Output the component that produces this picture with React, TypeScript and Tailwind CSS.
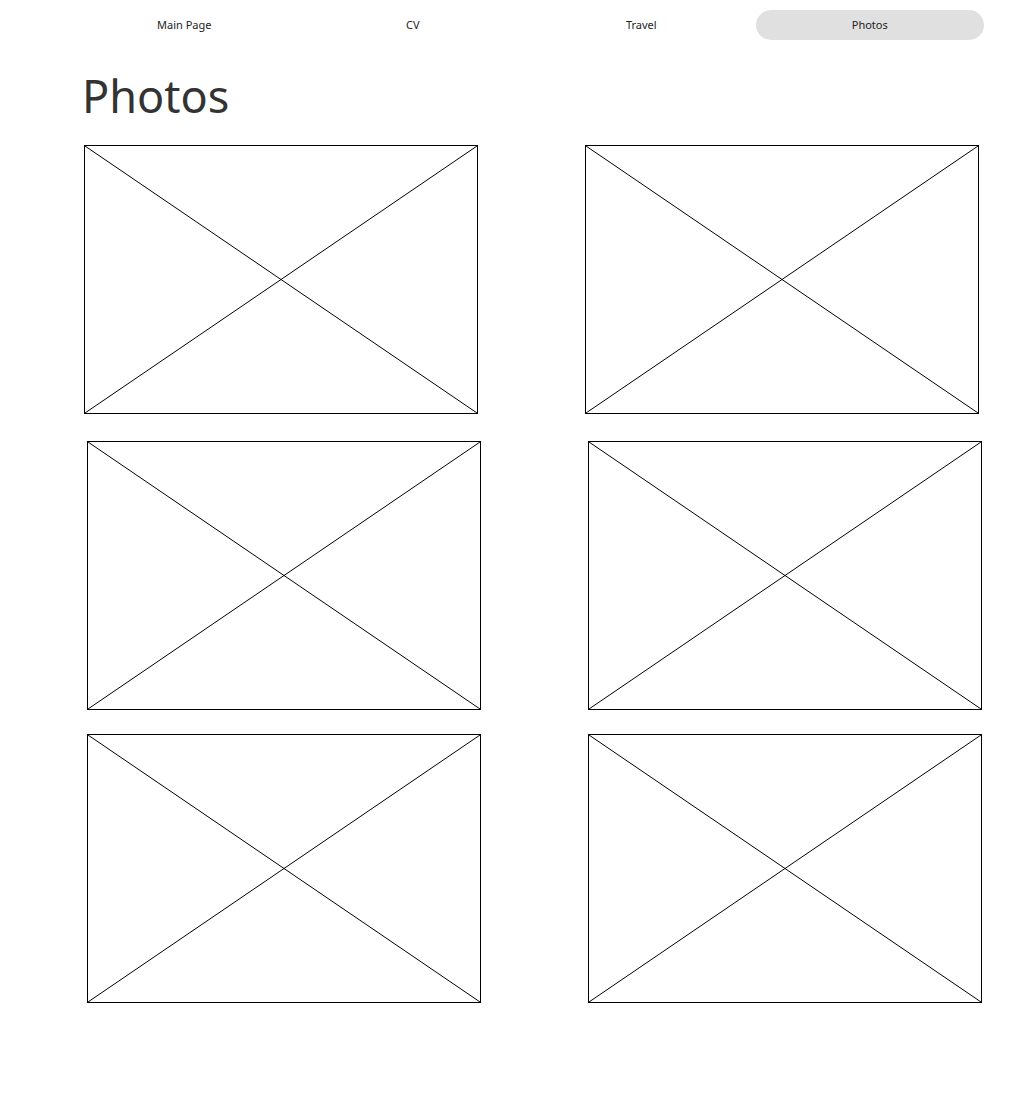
import React from "react";

const navItems = ["Main Page", "CV", "Travel", "Photos"];

function Placeholder() {
  return (
    <div className="relative w-[394px] h-[269px] border border-black bg-white">
      <svg
        className="absolute inset-0 w-full h-full"
        viewBox="0 0 100 100"
        preserveAspectRatio="none"
      >
        <line x1="0" y1="0" x2="100" y2="100" stroke="#000" strokeWidth="1" vectorEffect="non-scaling-stroke" />
        <line x1="100" y1="0" x2="0" y2="100" stroke="#000" strokeWidth="1" vectorEffect="non-scaling-stroke" />
      </svg>
    </div>
  );
}

export default function App() {
  return (
    <main
      className="min-h-[1113px] w-[1034px] bg-white text-[#333]"
      style={{ fontFamily: '"Source Sans Pro", "Noto Sans", "Open Sans", sans-serif' }}
    >
      <nav className="flex pl-[70px] pt-[10px]">
        {navItems.map((item) => (
          <div
            key={item}
            className={
              item === "Photos"
                ? "w-[228.5px] h-[30px] flex items-center justify-center rounded-full bg-[#e0e0e0] text-[11px] text-[#222]"
                : "w-[228.5px] h-[30px] flex items-center justify-center text-[11px] text-[#222]"
            }
          >
            {item}
          </div>
        ))}
      </nav>

      <h1 className="pl-[82px] mt-[28px] text-[45px] leading-[56px] font-normal text-[#333]">
        Photos
      </h1>

      <div className="flex flex-col mt-[21px]">
        <div className="flex gap-[107px] pl-[84px]">
          <Placeholder />
          <Placeholder />
        </div>
        <div className="flex gap-[107px] pl-[87px] mt-[27px]">
          <Placeholder />
          <Placeholder />
        </div>
        <div className="flex gap-[107px] pl-[87px] mt-[24px]">
          <Placeholder />
          <Placeholder />
        </div>
      </div>
    </main>
  );
}
